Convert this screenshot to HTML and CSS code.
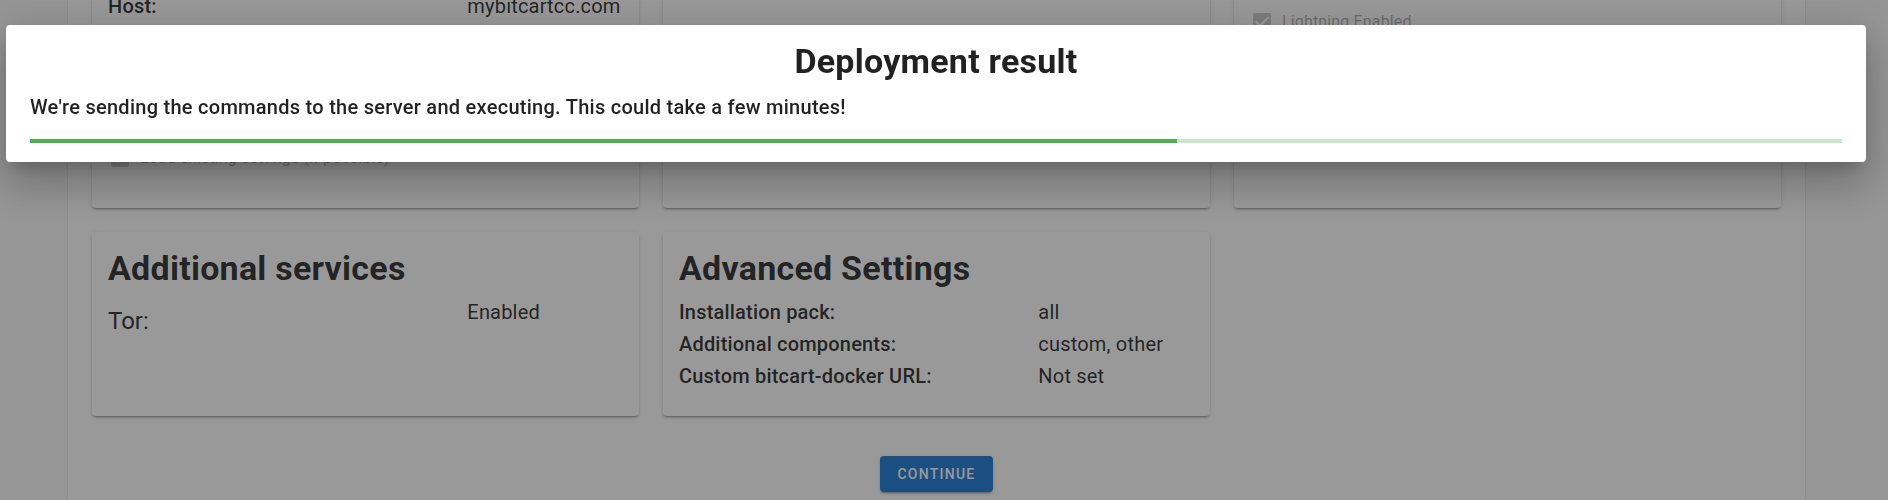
FILE: index.html
```html
<!DOCTYPE html>
<html lang="en">
<head>
<meta charset="utf-8">
<title>Deployment result</title>
<link rel="stylesheet" href="styles.css">
</head>
<body>
<div class="page">
  <main class="sheet">
    <div class="grid">
      <section class="card card-host">
        <div class="row">
          <div class="col-label strong">Host:</div>
          <div class="col-value">mybitcartcc.com</div>
        </div>
        <label class="check check-load">
          <svg class="check-icon" viewBox="0 0 24 24"><path d="M19 3H5c-1.11 0-2 .9-2 2v14c0 1.1.89 2 2 2h14c1.11 0 2-.9 2-2V5c0-1.1-.89-2-2-2zm-9 14l-5-5 1.410-1.41L10 14.17l7.59-7.59L19 8l-9 9z"/></svg>
          <span>Load existing settings (if possible)</span>
        </label>
      </section>
      <section class="card"></section>
      <section class="card card-lightning">
        <label class="check check-lightning">
          <svg class="check-icon" viewBox="0 0 24 24"><path d="M19 3H5c-1.11 0-2 .9-2 2v14c0 1.1.89 2 2 2h14c1.11 0 2-.9 2-2V5c0-1.1-.89-2-2-2zm-9 14l-5-5 1.41-1.41L10 14.17l7.59-7.59L19 8l-9 9z"/></svg>
          <span>Lightning Enabled</span>
        </label>
      </section>
      <section class="card card-summary">
        <h2 class="card-title">Additional services</h2>
        <div class="row">
          <div class="col-label tor">Tor:</div>
          <div class="col-value">Enabled</div>
        </div>
      </section>
      <section class="card card-summary">
        <h2 class="card-title">Advanced Settings</h2>
        <div class="row">
          <div class="col-label strong">Installation pack:</div>
          <div class="col-value">all</div>
        </div>
        <div class="row">
          <div class="col-label strong">Additional components:</div>
          <div class="col-value">custom, other</div>
        </div>
        <div class="row">
          <div class="col-label strong">Custom bitcart-docker URL:</div>
          <div class="col-value">Not set</div>
        </div>
      </section>
    </div>
    <div class="actions">
      <button class="btn" type="button">Continue</button>
    </div>
  </main>
</div>

<div class="overlay"></div>

<div class="dialog" role="dialog">
  <h1 class="dialog-title">Deployment result</h1>
  <p class="dialog-text">We're sending the commands to the server and executing. This could take a few minutes!</p>
  <div class="progress">
    <div class="progress-bar" style="width: 63.3%"></div>
  </div>
</div>
</body>
</html>
```

FILE: styles.css
```css
html, body {
  margin: 0;
  padding: 0;
  overflow: hidden;
  background: #fafafa;
  font-family: Roboto, "Noto Sans", "Liberation Sans", sans-serif;
  color: rgba(0, 0, 0, 0.87);
}

.page {
  width: 1872px;
  margin-top: -50px;
}

.sheet {
  margin: 0 67px 0 68px;
  padding: 24px 24px 40px;
  background: #fff;
  min-height: 700px;
  box-shadow: 0 2px 1px -1px rgba(0,0,0,.2), 0 1px 1px 0 rgba(0,0,0,.14), 0 1px 3px 0 rgba(0,0,0,.12);
}

.grid {
  display: grid;
  grid-template-columns: repeat(3, 1fr);
  gap: 24px;
}

.card {
  background: #fff;
  border-radius: 4px;
  padding: 16px;
  box-shadow: 0 3px 1px -2px rgba(0,0,0,.2), 0 2px 2px 0 rgba(0,0,0,.14), 0 1px 5px 0 rgba(0,0,0,.12);
}

.card-host {
  padding-bottom: 38px;
}

.card-summary {
  padding-bottom: 24px;
}

.card-title {
  margin: 0 0 8px;
  font-size: 34px;
  line-height: 40px;
  font-weight: 700;
  letter-spacing: 0.25px;
}

.row {
  display: flex;
  margin: 0 -12px;
  font-size: 20px;
  line-height: 32px;
  letter-spacing: 0.19px;
}

.col-label {
  flex: 0 0 66.6667%;
  box-sizing: border-box;
  padding: 0 12px;
}

.col-value {
  flex: 0 0 33.3333%;
  box-sizing: border-box;
  padding: 0 12px;
}

.strong {
  font-weight: 500;
}

.tor {
  font-size: 24px;
  padding-top: 9px;
  letter-spacing: 0;
}

.check {
  display: flex;
  align-items: center;
  gap: 8px;
  font-size: 16px;
  line-height: 24px;
  letter-spacing: 0.15px;
  color: rgba(0, 0, 0, 0.34);
}

.check-icon {
  width: 24px;
  height: 24px;
  fill: rgba(0, 0, 0, 0.2);
  flex: none;
}

.check-load {
  margin-top: 124px;
}

.check-lightning {
  margin-top: 20px;
}

.actions {
  display: flex;
  justify-content: center;
  margin-top: 40px;
}

.btn {
  height: 36px;
  padding: 0 17px;
  border: 0;
  border-radius: 4px;
  background: #1976d2;
  color: #fff;
  font-family: Roboto, "Noto Sans", sans-serif;
  font-size: 14px;
  font-weight: 500;
  letter-spacing: 1.25px;
  text-transform: uppercase;
  box-shadow: 0 3px 1px -2px rgba(0,0,0,.2), 0 2px 2px 0 rgba(0,0,0,.14), 0 1px 5px 0 rgba(0,0,0,.12);
}

.overlay {
  position: fixed;
  inset: 0;
  background: rgba(33, 33, 33, 0.46);
  z-index: 5;
}

.dialog {
  position: fixed;
  top: 25px;
  left: 6px;
  width: 1860px;
  box-sizing: border-box;
  padding: 16px 24px 19px;
  background: #fff;
  border-radius: 4px;
  z-index: 6;
  box-shadow: 0 11px 15px -7px rgba(0,0,0,.2), 0 24px 38px 3px rgba(0,0,0,.14), 0 9px 46px 8px rgba(0,0,0,.12);
}

.dialog-title {
  margin: 0;
  text-align: center;
  font-size: 34px;
  line-height: 40px;
  font-weight: 700;
  letter-spacing: 0.25px;
}

.dialog-text {
  margin: 10px 0 0;
  font-size: 20px;
  line-height: 32px;
  font-weight: 500;
  letter-spacing: 0.27px;
}

.progress {
  margin-top: 16px;
  height: 4px;
  background: #c8e6c9;
}

.progress-bar {
  height: 100%;
  background: #4caf50;
}
```
